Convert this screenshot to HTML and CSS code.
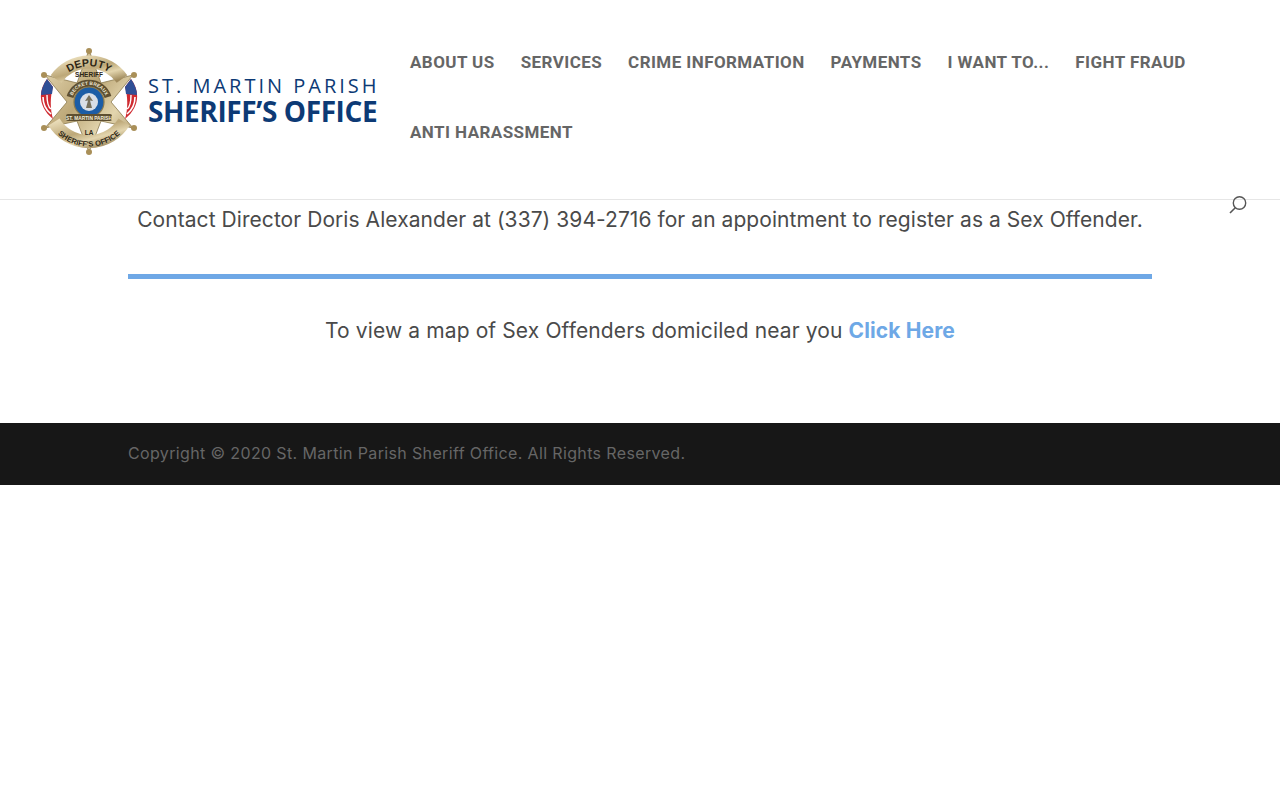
FILE: index.html
```html
<!DOCTYPE html>
<html lang="en">
<head>
  <meta charset="UTF-8" />
  <title>St. Martin Parish Sheriff's Office</title>
  <link rel="stylesheet" href="styles.css">
</head>
<body>
  <header class="site-header">
    <a class="logo" href="#">
      <svg class="badge" width="98" height="110" viewBox="1 0 98 110">
        <defs>
          <linearGradient id="gold" x1="0" y1="0" x2="1" y2="1">
            <stop offset="0" stop-color="#e9dcb8"/>
            <stop offset="0.45" stop-color="#bda878"/>
            <stop offset="0.7" stop-color="#e3d5ae"/>
            <stop offset="1" stop-color="#a08a5c"/>
          </linearGradient>
          <g id="flag">
            <path d="M8 32 C-1 44 -1 60 14 72 C11 62 11 50 14 40 Z" fill="#cf2a30"/>
            <path d="M4 50 C4 57 7 63 12 67" fill="none" stroke="#fff" stroke-width="1.6"/>
            <path d="M8 48 C8 54 9 60 12 62" fill="none" stroke="#fff" stroke-width="1.4"/>
            <path d="M8 32 C4 38 2 43 2 48 L13 47 L14 40 Z" fill="#2f4f96"/>
          </g>
        </defs>
        <!-- star -->
        <path class="star" d="M50 3 L62 36 L94 28 L72 55 L94 81 L62 74 L50 105 L38 74 L6 81 L28 55 L6 28 L38 36 Z"/>
        <use href="#flag"/>
        <use href="#flag" transform="matrix(-1 0 0 1 100 0)"/>
        <circle class="stud" cx="50" cy="4" r="3"/>
        <circle class="stud" cx="50" cy="105" r="3"/>
        <circle class="stud" cx="5" cy="28" r="3"/>
        <circle class="stud" cx="95" cy="28" r="3"/>
        <circle class="stud" cx="5" cy="81" r="3"/>
        <circle class="stud" cx="95" cy="81" r="3"/>
        <!-- top and bottom bands -->
        <path class="band" d="M17 32 A40.5 40.5 0 0 1 83 32"/>
        <path class="band" d="M15 75 A41 41 0 0 0 85 75"/>
        <path id="arcTop" d="M19 37 A36 36 0 0 1 81 37" fill="none"/>
        <text class="badge-text big"><textPath href="#arcTop" startOffset="50%" text-anchor="middle">DEPUTY</textPath></text>
        <path id="arcBottom" d="M11 77 A45 45 0 0 0 89 77" fill="none"/>
        <text class="badge-text"><textPath href="#arcBottom" startOffset="50%" text-anchor="middle">SHERIFF'S OFFICE</textPath></text>
        <text class="badge-text mid" x="50" y="30" text-anchor="middle">SHERIFF</text>
        <!-- state seal -->
        <path id="arcSeal" d="M33 50 A18 18 0 0 1 67 50" fill="none"/>
        <path class="dark-band" d="M31 50 A20 20 0 0 1 69 50"/>
        <text class="badge-text tiny light"><textPath href="#arcSeal" startOffset="50%" text-anchor="middle">BECKET BREAUX</textPath></text>
        <circle cx="50" cy="55" r="15" fill="#1c5da6" stroke="#8b7a4e" stroke-width="1.2"/>
        <circle cx="50" cy="55" r="9" fill="#d9dee6"/>
        <path d="M50 48 L54 54 L51 53.5 L53 61 L47 61 L49 53.5 L46 54 Z" fill="#77705c"/>
        <rect x="27" y="67" width="46" height="7" rx="2" fill="#5e4f31"/>
        <text class="badge-text tiny light" x="50" y="72.5" text-anchor="middle">ST. MARTIN PARISH</text>
        <text class="badge-text mid" x="50" y="88" text-anchor="middle">LA</text>
      </svg>
      <span class="logo-words">
        <span class="logo-top">ST. MARTIN PARISH</span>
        <span class="logo-bottom">SHERIFF’S OFFICE</span>
      </span>
    </a>
    <nav class="main-nav">
      <a href="#">ABOUT US</a>
      <a href="#">SERVICES</a>
      <a href="#">CRIME INFORMATION</a>
      <a href="#">PAYMENTS</a>
      <a href="#">I WANT TO...</a>
      <a href="#">FIGHT FRAUD</a>
      <a href="#">ANTI HARASSMENT</a>
    </nav>
    <svg class="search-icon" width="18" height="18" viewBox="0 0 18 18">
      <circle cx="10.5" cy="7" r="6.2" fill="none" stroke="#555" stroke-width="1.4"/>
      <path d="M6.3 11.7 L1 17" stroke="#555" stroke-width="1.6" fill="none"/>
    </svg>
  </header>

  <main class="content">
    <p class="lead">Contact Director Doris Alexander at (337) 394-2716 for an appointment to register as a Sex Offender.</p>
    <hr class="divider" />
    <p class="lead lead-map">To view a map of Sex Offenders domiciled near you <a href="#">Click Here</a></p>
  </main>

  <footer class="site-footer">
    <p>Copyright © 2020 St. Martin Parish Sheriff Office. All Rights Reserved.</p>
  </footer>
</body>
</html>
```
FILE: styles.css
```css
body {
  margin: 0;
  font-family: 'Inter', 'Open Sans', sans-serif;
  background-color: white;
  color: #4a4a4a;
}

.site-header {
  position: relative;
  display: flex;
  height: 199px;
  border-bottom: 1px solid #e6e6e6;
}

.logo {
  display: flex;
  align-items: center;
  gap: 10px;
  width: 338px;
  margin-left: 40px;
  margin-right: 32px;
  text-decoration: none;
  flex-shrink: 0;
}

.logo-words {
  display: flex;
  flex-direction: column;
  margin-top: -1px;
  color: #0d3a75;
  white-space: nowrap;
}

.logo-top {
  font-family: 'Open Sans', sans-serif;
  font-size: 20px;
  line-height: 24px;
  letter-spacing: 3px;
}

.logo-bottom {
  font-family: 'Open Sans', sans-serif;
  font-size: 28px;
  font-weight: 700;
  line-height: 27px;
  letter-spacing: -0.4px;
}

.badge {
  flex-shrink: 0;
  margin-top: 5px;
}

.star {
  fill: url(#gold);
  stroke: #8b7a4e;
  stroke-width: 0.8;
}

.stud {
  fill: #a98f58;
}

.band {
  fill: none;
  stroke: url(#gold);
  stroke-width: 13;
}

.dark-band {
  fill: none;
  stroke: #5e4f31;
  stroke-width: 7;
}

.badge-text {
  font-family: 'Liberation Sans', sans-serif;
  font-size: 7.5px;
  font-weight: 700;
  fill: #2d2615;
}

.badge-text.big {
  font-size: 10.5px;
}

.badge-text.mid {
  font-size: 6.5px;
}

.badge-text.tiny {
  font-size: 4.8px;
}

.badge-text.light {
  fill: #f2ecd8;
}

.main-nav {
  display: flex;
  flex-wrap: wrap;
  align-content: flex-start;
  column-gap: 26px;
  width: 800px;
  padding-top: 27px;
}

.main-nav a {
  font-family: 'Roboto', sans-serif;
  font-size: 17px;
  font-weight: 700;
  line-height: 70px;
  letter-spacing: 0.43px;
  color: #666;
  text-decoration: none;
}

.search-icon {
  position: absolute;
  top: 196px;
  left: 1229px;
}

.content {
  width: 1024px;
  margin: 0 auto;
  height: 223px;
  text-align: center;
}

.lead {
  margin: 0;
  font-size: 21px;
  line-height: 30px;
  letter-spacing: 0.06px;
  color: #4a4a4a;
}

.lead-map {
  letter-spacing: 0.12px;
}

.content .lead:first-child {
  padding-top: 5px;
}

.lead a {
  color: #6ea8e6;
  font-weight: 700;
  text-decoration: none;
}

.divider {
  height: 5px;
  margin: 39px 0 37px;
  border: none;
  background-color: #6fa8e6;
}

.site-footer {
  background-color: #171717;
  height: 62px;
  padding-left: 128px;
  display: flex;
  align-items: center;
}

.site-footer p {
  margin: -2px 0 0;
  font-size: 16px;
  letter-spacing: 0.36px;
  color: #666;
}
```
